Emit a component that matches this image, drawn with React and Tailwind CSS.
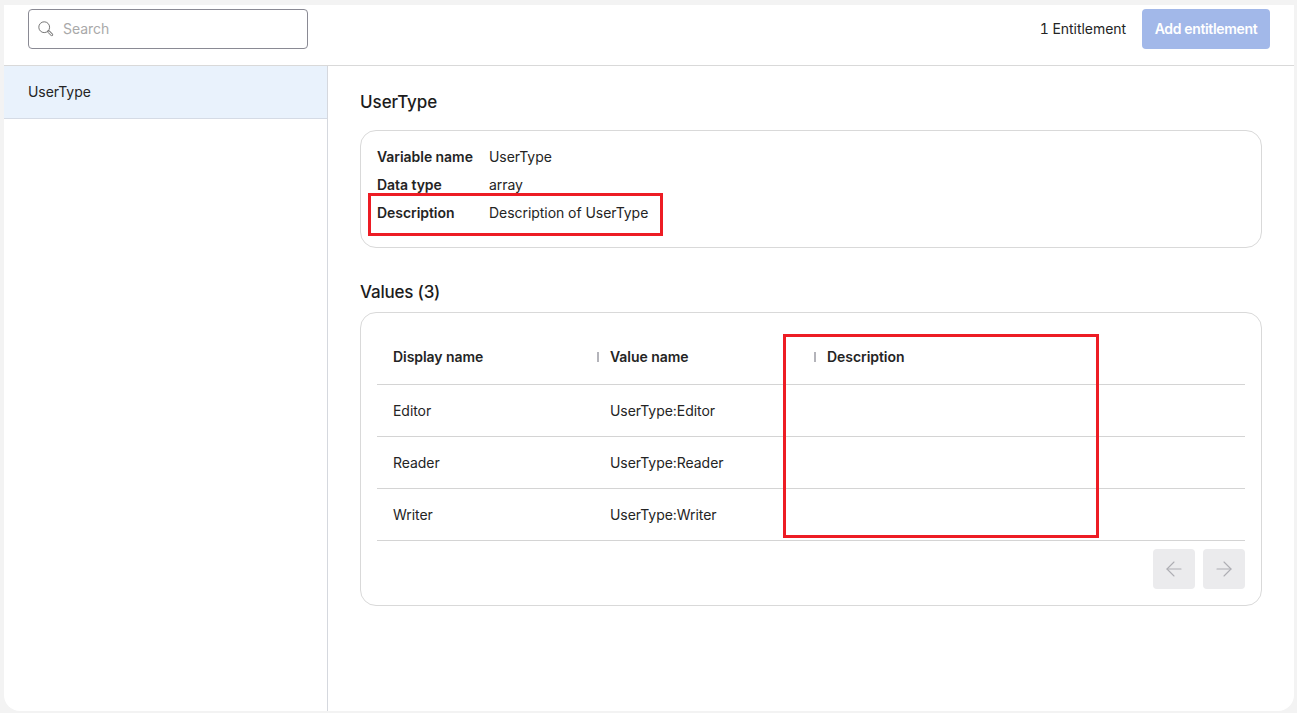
import { ArrowLeft, ArrowRight } from "lucide-react";

const details = [
  ["Variable name", "UserType"],
  ["Data type", "array"],
  ["Description", "Description of UserType"],
];

const rows = [
  ["Editor", "UserType:Editor"],
  ["Reader", "UserType:Reader"],
  ["Writer", "UserType:Writer"],
];

const columns = ["Display name", "Value name", "Description"];

function SearchIcon() {
  return (
    <svg viewBox="0 0 16 16" className="h-4 w-4 shrink-0" fill="none">
      <circle cx="6.2" cy="6.2" r="5.4" stroke="#777" strokeWidth="1" />
      <path d="M10.6 10.6 L13.8 13.8" stroke="#777" strokeWidth="2.8" strokeLinecap="round" />
      <path d="M10.8 10.8 L13.8 13.8" stroke="#fff" strokeWidth="1.1" strokeLinecap="round" />
    </svg>
  );
}

export default function App() {
  return (
    <div
      className="relative h-[713px] w-full overflow-hidden bg-[#f3f3f3] pt-[5px] pr-[3px] pb-[2px] pl-1 text-sm tracking-[-0.05px] text-[#242424]"
      style={{ fontFamily: "Inter, sans-serif" }}
    >
      <div className="flex h-full flex-col rounded-b-2xl bg-white">
        <div className="flex h-[61px] shrink-0 items-start justify-between border-b border-[#d9d9d9] px-6 pt-1">
          <div className="flex h-10 w-[280px] items-center gap-[9px] rounded border border-[#8a8a94] pl-[9px]">
            <SearchIcon />
            <span className="text-[#a9a9a9]">Search</span>
          </div>
          <div className="flex items-center gap-4">
            <span className="tabular-nums">1 Entitlement</span>
            <button className="h-10 w-32 rounded bg-[#a2b8e9] font-semibold tracking-[-0.35px] text-white">
              Add entitlement
            </button>
          </div>
        </div>

        <div className="flex min-h-0 flex-1">
          <div className="w-[324px] shrink-0 border-r border-[#d5d8de]">
            <div className="flex h-[53px] items-center border-b border-[#d5dbe5] bg-[#e9f2fc] pl-6">
              UserType
            </div>
          </div>

          <div className="flex-1 pt-6 pr-8 pl-8">
            <h2 className="text-[17px] leading-6 font-medium tracking-[-0.05px] text-[#1c1c1c]">UserType</h2>
            <div className="mt-4 h-[118px] rounded-2xl border border-[#d9d9d9] px-4 pt-3">
              {details.map(([label, value]) => (
                <div key={label} className="flex h-7 items-center">
                  <span className="w-28 font-semibold">{label}</span>
                  <span>{value}</span>
                </div>
              ))}
            </div>

            <h2 className="mt-8 text-[17px] leading-6 font-medium tracking-[-0.2px] text-[#1c1c1c]">Values (3)</h2>
            <div className="mt-2 h-[294px] rounded-2xl border border-[#d9d9d9] px-4 pt-4">
              <div className="grid h-14 grid-cols-[217px_217px_1fr] items-center border-b border-[#d4d4d4] font-semibold">
                {columns.map((col, i) => (
                  <div key={col} className="flex items-center pl-4">
                    {i > 0 && <span className="mr-[11px] -ml-[13px] h-2.5 w-0.5 bg-[#b4b4ba]" />}
                    {col}
                  </div>
                ))}
              </div>
              {rows.map(([name, value]) => (
                <div
                  key={name}
                  className="grid h-[52px] grid-cols-[217px_217px_1fr] items-center border-b border-[#d4d4d4]"
                >
                  <div className="pl-4">{name}</div>
                  <div className="pl-4">{value}</div>
                  <div />
                </div>
              ))}
              <div className="mt-2 flex justify-end gap-2">
                <button className="flex h-10 w-[42px] items-center justify-center rounded bg-[#ebebed] text-[#aeaeb4]">
                  <ArrowLeft className="h-6 w-6" strokeWidth={1.1} />
                </button>
                <button className="flex h-10 w-[42px] items-center justify-center rounded bg-[#ebebed] text-[#aeaeb4]">
                  <ArrowRight className="h-6 w-6" strokeWidth={1.1} />
                </button>
              </div>
            </div>
          </div>
        </div>
      </div>

      {/* red annotation boxes drawn over the screenshot */}
      <div className="absolute top-[193px] left-[368px] h-[43px] w-[295px] border-[3px] border-[#ed1c24]" />
      <div className="absolute top-[334px] left-[783px] h-[204px] w-[316px] border-[3px] border-[#ed1c24]" />
    </div>
  );
}
